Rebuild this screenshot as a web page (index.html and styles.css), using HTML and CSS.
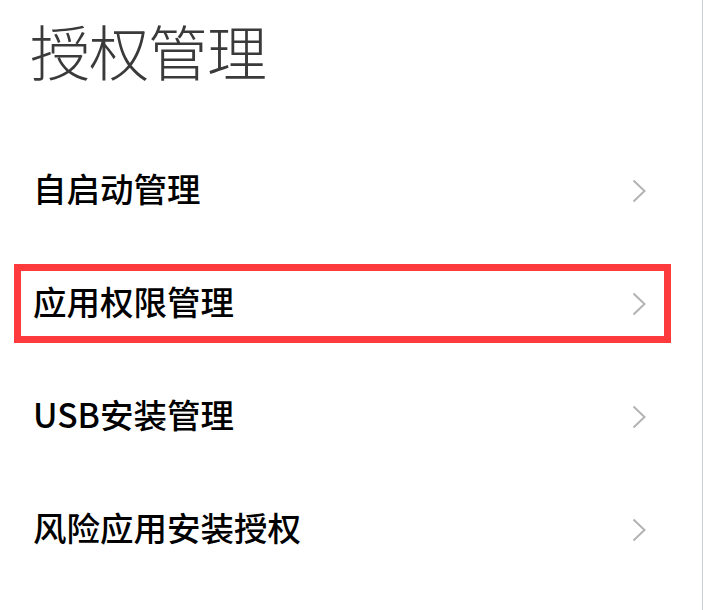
FILE: index.html
```html
<!DOCTYPE html>
<html lang="zh-CN">
<head>
<meta charset="utf-8">
<title>授权管理</title>
<link rel="stylesheet" href="styles.css">
</head>
<body>
<div class="page">
  <h1 class="title">授权管理</h1>
  <ul class="list">
    <li class="row">
      <div class="row-inner">
        <span class="label">自启动管理</span>
        <svg class="chev" width="14" height="24" viewBox="0 0 14 24"><polyline points="1.5,1.5 12.5,12 1.5,22.5" /></svg>
      </div>
    </li>
    <li class="row">
      <div class="row-inner highlight">
        <span class="label">应用权限管理</span>
        <svg class="chev" width="14" height="24" viewBox="0 0 14 24"><polyline points="1.5,1.5 12.5,12 1.5,22.5" /></svg>
      </div>
    </li>
    <li class="row">
      <div class="row-inner">
        <span class="label">USB安装管理</span>
        <svg class="chev" width="14" height="24" viewBox="0 0 14 24"><polyline points="1.5,1.5 12.5,12 1.5,22.5" /></svg>
      </div>
    </li>
    <li class="row">
      <div class="row-inner">
        <span class="label">风险应用安装授权</span>
        <svg class="chev" width="14" height="24" viewBox="0 0 14 24"><polyline points="1.5,1.5 12.5,12 1.5,22.5" /></svg>
      </div>
    </li>
  </ul>
</div>
</body>
</html>
```
FILE: styles.css
```css
html, body {
  margin: 0;
  padding: 0;
  background: #ffffff;
}
.page {
  box-sizing: border-box;
  width: 703px;
  min-height: 610px;
  border-right: 1px solid #c9ccd0;
  font-family: "Noto Sans CJK SC", "Noto Sans", sans-serif;
}
.title {
  margin: 0;
  padding: 20px 0 0 30px;
  font-size: 60px;
  line-height: 60px;
  font-weight: 300;
  color: #3a3a3a;
  letter-spacing: -1px;
}
.list {
  list-style: none;
  margin: 0;
  padding: 54px 0 0 0;
}
.row {
  height: 113px;
  display: flex;
  align-items: center;
  padding: 0 31px 0 14px;
}
.row-inner {
  box-sizing: border-box;
  flex: 1;
  height: 79px;
  display: flex;
  align-items: center;
  justify-content: space-between;
  border: 7px solid transparent;
  padding: 0 18px 0 12px;
}
.row-inner.highlight {
  border-color: #ff3a3c;
}
.label {
  font-size: 33.5px;
  line-height: 34px;
  padding-bottom: 5px;
  font-weight: 500;
  color: #000000;
}
.chev polyline {
  fill: none;
  stroke: #b3b3b3;
  stroke-width: 2;
}
```
